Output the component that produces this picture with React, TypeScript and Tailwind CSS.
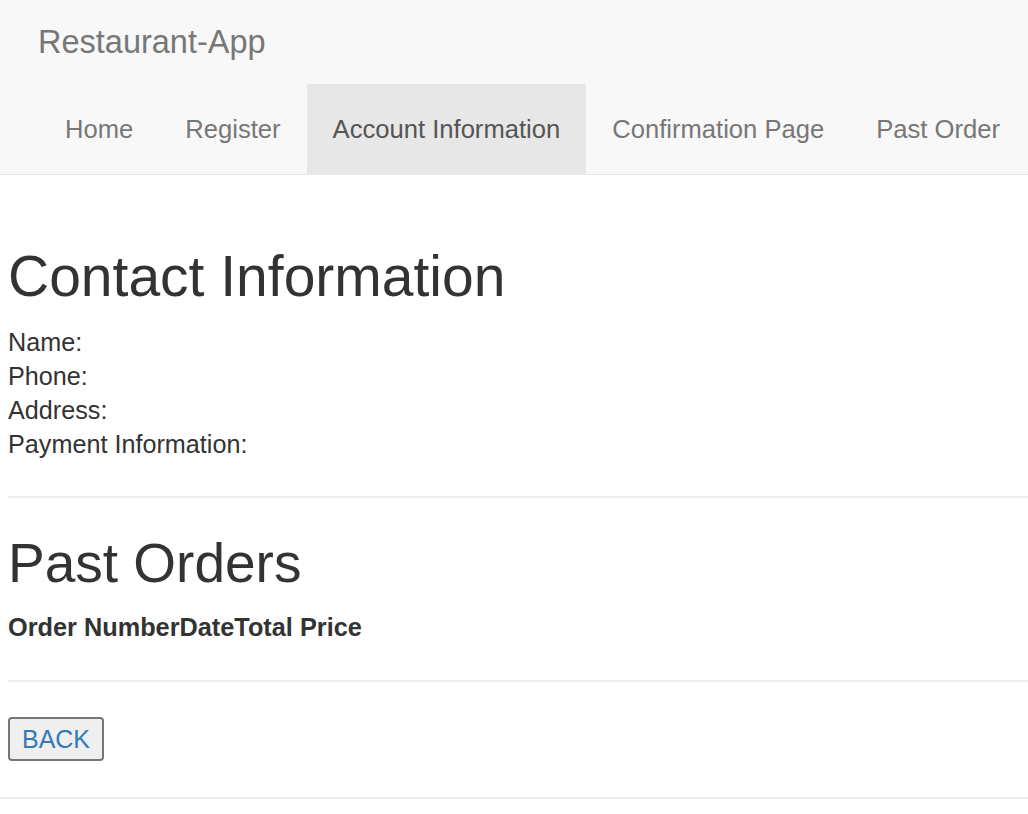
export default function App() {
  const font = "font-['Liberation_Sans',Arial,sans-serif]";
  const links = ["Home", "Register", "Account Information", "Confirmation Page", "Past Order"];
  return (
    <div className={`${font} min-h-[814px] bg-white text-[#333] overflow-hidden`}>
      <nav className="bg-[#f8f8f8] border-b border-[#e7e7e7]">
        <div className="h-[84px] flex items-center pl-[38px]">
          <span className="text-[32.5px] text-[#777] leading-none">Restaurant-App</span>
        </div>
        <ul className="flex h-[90px] pl-[39px]">
          {links.map((l) => (
            <li
              key={l}
              className={`flex shrink-0 items-center whitespace-nowrap px-[26px] text-[25.6px] ${
                l === "Account Information" ? "bg-[#e7e7e7] text-[#555]" : "text-[#777]"
              }`}
            >
              {l}
            </li>
          ))}
        </ul>
      </nav>
      <div className="pl-[8px]">
        <h1 className="text-[57px] leading-none mt-[73px] mb-[20px]">Contact Information</h1>
        <div className="text-[25.2px] leading-[34px]">
          <div>Name:</div>
          <div>Phone:</div>
          <div>Address:</div>
          <div>Payment Information:</div>
        </div>
        <hr className="border-t-2 border-[#eee] mt-[35px]" />
        <h1 className="text-[55px] leading-none mt-[38px] mb-[19px]">Past Orders</h1>
        <div className="text-[25.3px] font-bold leading-[34px]">
          <span>Order Number</span>
          <span>Date</span>
          <span>Total Price</span>
        </div>
        <hr className="border-t-2 border-[#eee] mt-[36px]" />
        <button className="mt-[35px] h-[44px] w-[96px] border-2 border-[#767676] rounded-[4px] bg-[#efefef] text-[#337ab7] text-[25px] leading-none">
          BACK
        </button>
      </div>
      <hr className="border-t-2 border-[#eee] mt-[36px]" />
    </div>
  );
}
